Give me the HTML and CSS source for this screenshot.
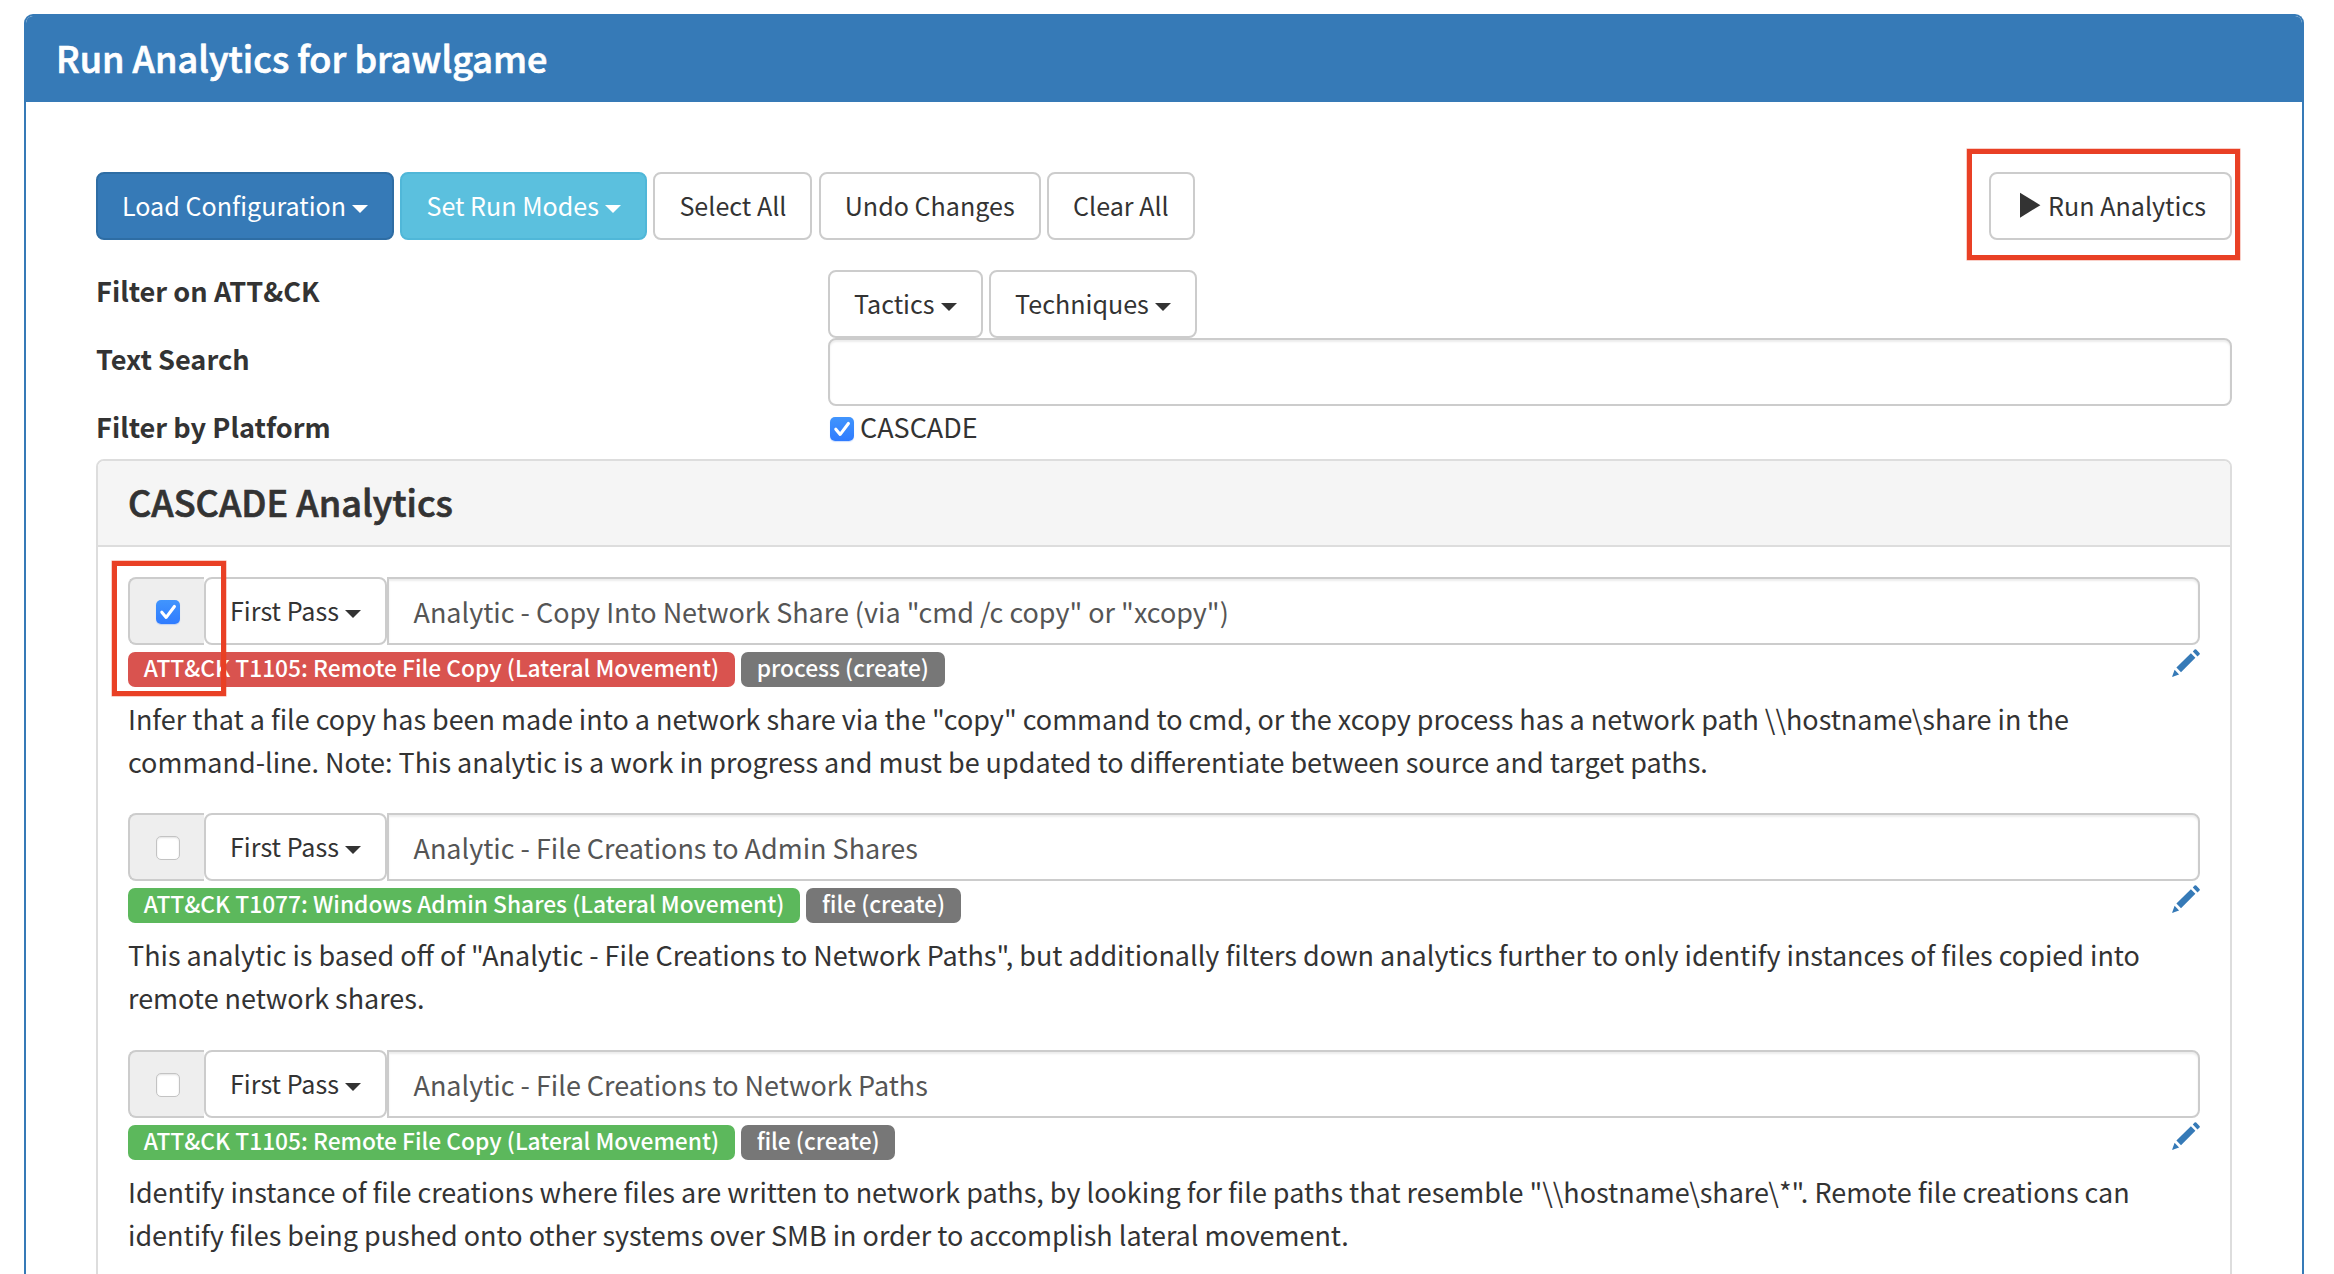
FILE: index.html
```
<!DOCTYPE html>
<html lang="en">
<head>
<meta charset="utf-8">
<title>Run Analytics</title>
<link rel="stylesheet" href="styles.css">
</head>
<body>
<svg class="defs" aria-hidden="true">
  <symbol id="pencil" viewBox="0 0 28 28"><path d="M0 28l2.6-7.2 4.5 4.7zM4.4 18.5L18.9 4.3l4.5 4.5L9 23.3zM20.8 2.5L22.6.6q.8-.8 1.6 0l3.3 3.3q.8.8 0 1.6l-2 1.9z"/></symbol>
  <symbol id="check" viewBox="0 0 24 24"><path d="M5.8 12.2l4.4 5.2L18.4 6.5" fill="none" stroke="#fff" stroke-width="3.1" stroke-linecap="round" stroke-linejoin="round"/></symbol>
</svg>
<main class="panel">
  <header class="panel-head"><h1>Run Analytics for brawlgame</h1></header>
  <div class="panel-body">
    <div class="toolbar">
      <button class="btn primary">Load Configuration<i class="caret"></i></button>
      <button class="btn info">Set Run Modes<i class="caret"></i></button>
      <button class="btn">Select All</button>
      <button class="btn">Undo Changes</button>
      <button class="btn">Clear All</button>
      <div class="run">
        <button class="btn"><svg class="play" viewBox="0 0 28 28"><path d="M5 1.7v25L25.4 14.2z"/></svg>Run Analytics</button>
        <div class="mark mark-run"></div>
      </div>
    </div>
    <div class="filters">
      <label>Filter on ATT&amp;CK</label>
      <div class="pair"><button class="btn">Tactics<i class="caret"></i></button><button class="btn">Techniques<i class="caret"></i></button></div>
      <label>Text Search</label>
      <div class="field search"></div>
      <label>Filter by Platform</label>
      <div class="platform"><span class="box checked"><svg><use href="#check"/></svg></span>CASCADE</div>
    </div>
    <section class="list">
      <header class="list-head"><h2>CASCADE Analytics</h2></header>
      <div class="list-body">
        <article class="item">
          <div class="row">
            <div class="addon"><span class="box checked"><svg><use href="#check"/></svg></span></div>
            <button class="btn pass">First Pass<i class="caret"></i></button>
            <div class="field name">Analytic - Copy Into Network Share (via "cmd /c copy" or "xcopy")</div>
          </div>
          <div class="tags"><span class="tag danger">ATT&amp;CK T1105: Remote File Copy (Lateral Movement)</span><span class="tag">process (create)</span><svg class="edit"><use href="#pencil"/></svg></div>
          <p>Infer that a file copy has been made into a network share via the "copy" command to cmd, or the xcopy process has a network path \\hostname\share in the<br>command-line. Note: This analytic is a work in progress and must be updated to differentiate between source and target paths.</p>
          <div class="mark mark-item"></div>
        </article>
        <article class="item">
          <div class="row">
            <div class="addon"><span class="box"></span></div>
            <button class="btn pass">First Pass<i class="caret"></i></button>
            <div class="field name">Analytic - File Creations to Admin Shares</div>
          </div>
          <div class="tags"><span class="tag success">ATT&amp;CK T1077: Windows Admin Shares (Lateral Movement)</span><span class="tag">file (create)</span><svg class="edit"><use href="#pencil"/></svg></div>
          <p>This analytic is based off of "Analytic - File Creations to Network Paths", but additionally filters down analytics further to only identify instances of files copied into<br>remote network shares.</p>
        </article>
        <article class="item">
          <div class="row">
            <div class="addon"><span class="box"></span></div>
            <button class="btn pass">First Pass<i class="caret"></i></button>
            <div class="field name">Analytic - File Creations to Network Paths</div>
          </div>
          <div class="tags"><span class="tag success">ATT&amp;CK T1105: Remote File Copy (Lateral Movement)</span><span class="tag">file (create)</span><svg class="edit"><use href="#pencil"/></svg></div>
          <p>Identify instance of file creations where files are written to network paths, by looking for file paths that resemble "\\hostname\share\*". Remote file creations can<br>identify files being pushed onto other systems over SMB in order to accomplish lateral movement.</p>
        </article>
      </div>
    </section>
  </div>
</main>
</body>
</html>
```
FILE: styles.css
```
* { box-sizing: border-box; }
html, body { height: 100%; overflow: hidden; }
body {
  margin: 0;
  padding: 14px 30px 0 24px;
  background: #fff;
  color: #333;
  font: 26.96px/43px "Noto Sans CJK SC", "Noto Sans", sans-serif;
}
.defs { display: none; }
h1, h2, p { margin: 0; }
h1, h2 { font-size: 36.05px; font-weight: 500; line-height: 44px; -webkit-text-stroke: .7px; }

.panel { height: 1260px; overflow: hidden; border: 2px solid #367ab7; border-bottom: 0; border-radius: 9px 9px 0 0; }
.panel-head {
  display: flex;
  align-items: center;
  height: 86px;
  padding: 0 30px 4px;
  background: #367ab7;
  color: #fff;
  border-radius: 6px 6px 0 0;
}
.panel-body { padding: 70px 70px 0; }

.btn {
  display: inline-flex;
  align-items: center;
  justify-content: center;
  gap: 6px;
  height: 68px;
  padding: 0 24px 2px;
  border: 2px solid #ccc;
  border-radius: 8px;
  background: #fff;
  color: #333;
  font: 25.1px/40px "Noto Sans CJK SC", "Noto Sans", sans-serif;
  white-space: nowrap;
}
.primary { background: #367ab7; border-color: #2e6da4; color: #fff; }
.info { background: #5bc0de; border-color: #50b7d8; color: #fff; }
.caret {
  margin-top: 8px;
  border: 8px solid transparent;
  border-top-color: currentColor;
  border-bottom: 0;
}
.toolbar { display: flex; gap: 6.4px; height: 98px; }
.run { position: relative; height: 68px; margin-left: auto; }
.run .btn { gap: 5.5px; }
.play { width: 28px; height: 28px; fill: currentColor; }

.filters {
  display: grid;
  grid-template-columns: 732px 1fr;
  grid-template-rows: 68px 68px 53px;
}
.filters label { margin-top: -1px; font-size: 27.15px; font-weight: 700; }
.pair { display: flex; gap: 6.5px; }
.field {
  height: 68px;
  border: 2px solid #ccc;
  border-radius: 8px;
  background: #fff;
  box-shadow: inset 0 2px 2px rgba(0, 0, 0, .075);
}
.platform { display: flex; gap: 6px; height: 43px; margin-top: -1px; padding-left: 2px; }
.platform .box { margin-top: 12px; }

.box {
  width: 24px;
  height: 24px;
  border: 1px solid #c3c3c3;
  border-radius: 5px;
  background: #fff;
  box-shadow: inset 0 1px 2px rgba(0, 0, 0, .12);
}
.checked {
  border: 0;
  background: linear-gradient(#4195fd, #2f7bff);
  box-shadow: 0 1px 1px rgba(47, 123, 255, .25);
}
.box svg { display: block; width: 24px; height: 24px; }

.list { height: 1000px; border: 2px solid #ddd; border-radius: 8px; }
.list-head {
  display: flex;
  align-items: center;
  height: 86px;
  padding: 0 30px 5px;
  background: #f5f5f5;
  border-bottom: 2px solid #ddd;
  border-radius: 6px 6px 0 0;
}
.list-body { padding: 30px 30px 0; }
.item { position: relative; height: 236px; }
.item:nth-child(2) { height: 237px; }
.row { display: flex; }
.addon {
  display: flex;
  align-items: center;
  width: 76px;
  height: 68px;
  padding: 2px 0 0 26px;
  background: #eee;
  border: 2px solid #ccc;
  border-right: 0;
  border-radius: 8px 0 0 8px;
}
.pass { width: 183px; }
.name {
  flex: 1;
  padding-left: 24.5px;
  border-radius: 0 8px 8px 0;
  color: #555;
  line-height: 66px;
}
.tags { display: flex; gap: 6px; margin-top: 7px; }
.tag {
  height: 35px;
  padding: 0 15.8px;
  border-radius: 7px;
  background: #777;
  color: #fff;
  font-size: 22.78px;
  font-weight: 500;
  line-height: 32px;
}
.danger { background: #d9534f; }
.success { background: #5cb85c; }
.edit { width: 28px; height: 28px; margin: -3px 0 0 auto; fill: #367ab7; }
.item p { margin-top: 10px; white-space: nowrap; }

.mark { position: absolute; border: 5px solid #e94025; box-shadow: 0 0 0 .5px rgba(233, 64, 37, .5); pointer-events: none; }
.mark-run { left: -22px; top: -23.5px; width: 273.5px; height: 111px; }
.mark-item { left: -16px; top: -16.5px; width: 114px; height: 135px; }
```
